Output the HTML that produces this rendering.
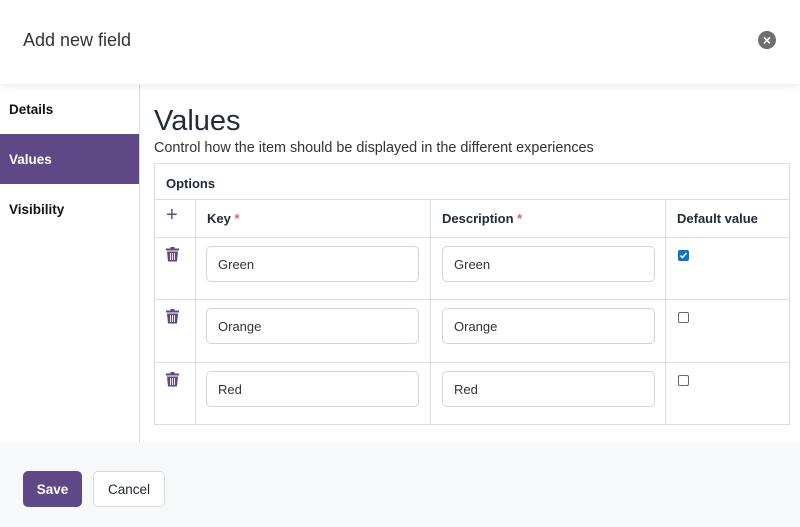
<!DOCTYPE html>
<html><head><style>
*{box-sizing:border-box;margin:0;padding:0}
body{width:800px;height:527px;overflow:hidden;background:#fff;font-family:"Liberation Sans",sans-serif;color:#222b38;position:relative}
.hdr{position:absolute;left:0;top:0;width:800px;height:84px;background:#fff;box-shadow:0 2px 10px rgba(0,0,0,.08);z-index:2}
.hdr h1{position:absolute;left:23px;top:30px;font-size:18px;font-weight:normal;color:#333}
.close{position:absolute;left:758px;top:31px;width:18px;height:18px;border-radius:50%;background:#6f6f6f;color:#fff;font-size:14px;font-weight:bold;line-height:18px;text-align:center}
.side{position:absolute;left:0;top:84px;width:140px;height:358px;border-right:1px solid #ddd}
.side div{height:50px;padding-left:9px;line-height:52px;font-size:13.5px;font-weight:bold;color:#111}
.side .act{background:#5f4886;color:#fff}
h2{position:absolute;left:154px;top:105px;font-size:29px;font-weight:normal;color:#222b38}
.sub{position:absolute;left:154px;top:140px;font-size:14.4px;color:#333}
table{position:absolute;left:154px;top:163px;width:636px;border-collapse:collapse;font-size:13px}
td,th{border:1px solid #dcdce0;vertical-align:top;text-align:left}
th{font-weight:bold;color:#222b38}
.star{color:#e35b7a}
input[type=text]{width:213px;height:36px;border:1px solid #d3d3d8;border-radius:5px;padding-left:11px;font:13px "Liberation Sans",sans-serif;color:#333;margin:8px 0 0 10px}
.cb{display:inline-block;width:11px;height:11px;border:1px solid #666;border-radius:2px;margin:12px 0 0 12px;background:#fff}
.cb.on{background:#0b6fd8;border-color:#0b6fd8}
.trash{margin:9px 0 0 11px}
.foot{position:absolute;left:0;top:442px;width:800px;height:85px;background:#f7f8fa}
.btn{position:absolute;top:29px;height:36px;border-radius:5px;font-size:13.5px;line-height:37px;text-align:center}
</style></head><body>
<div class="hdr"><h1>Add new field</h1><div class="close">×</div></div>
<div class="side"><div style="height:50px;line-height:52px">Details</div><div class="act">Values</div><div>Visibility</div></div>
<h2>Values</h2>
<div class="sub">Control how the item should be displayed in the different experiences</div>
<table>
<tr style="height:36px"><th colspan="4" style="padding:12px 0 0 11px">Options</th></tr>
<tr style="height:38px"><th style="width:41px;padding:4px 0 0 11px;color:#5f4886;font-size:20px;font-weight:normal">+</th><th style="width:235px;padding:11px 0 0 11px">Key <span class="star">*</span></th><th style="width:235px;padding:11px 0 0 11px">Description <span class="star">*</span></th><th style="padding:11px 0 0 11px">Default value</th></tr>
<tr style="height:62px"><td><svg class="trash" width="13" height="15" viewBox="0 0 13 15"><rect x="0" y="1.5" width="13" height="2" fill="#5f4886"/><rect x="4.5" y="0" width="4" height="2" fill="#5f4886"/><path d="M1 4.5h11l-1 10H2z" fill="#5f4886"/><path d="M4.5 6v7M6.5 6v7M8.5 6v7" stroke="#fff" stroke-width=".9"/></svg></td><td><input type="text" value="Green"></td><td><input type="text" value="Green" style="margin-left:11px"></td><td><span class="cb on"><svg width="9" height="9" viewBox="0 0 9 9" style="display:block"><path d="M1.5 4.5l2 2 4-4.5" stroke="#fff" stroke-width="1.6" fill="none"/></svg></span></td></tr>
<tr style="height:63px"><td><svg class="trash" width="13" height="15" viewBox="0 0 13 15"><rect x="0" y="1.5" width="13" height="2" fill="#5f4886"/><rect x="4.5" y="0" width="4" height="2" fill="#5f4886"/><path d="M1 4.5h11l-1 10H2z" fill="#5f4886"/><path d="M4.5 6v7M6.5 6v7M8.5 6v7" stroke="#fff" stroke-width=".9"/></svg></td><td><input type="text" value="Orange"></td><td><input type="text" value="Orange" style="margin-left:11px"></td><td><span class="cb"></span></td></tr>
<tr style="height:62px"><td><svg class="trash" width="13" height="15" viewBox="0 0 13 15"><rect x="0" y="1.5" width="13" height="2" fill="#5f4886"/><rect x="4.5" y="0" width="4" height="2" fill="#5f4886"/><path d="M1 4.5h11l-1 10H2z" fill="#5f4886"/><path d="M4.5 6v7M6.5 6v7M8.5 6v7" stroke="#fff" stroke-width=".9"/></svg></td><td><input type="text" value="Red"></td><td><input type="text" value="Red" style="margin-left:11px"></td><td><span class="cb"></span></td></tr>
</table>
<div class="foot">
<div class="btn" style="left:23px;width:59px;background:#5f4886;color:#fff;font-weight:bold">Save</div>
<div class="btn" style="left:93px;width:72px;background:#fff;border:1px solid #d8d8de;color:#222b38;line-height:35px">Cancel</div>
</div>
</body></html>
